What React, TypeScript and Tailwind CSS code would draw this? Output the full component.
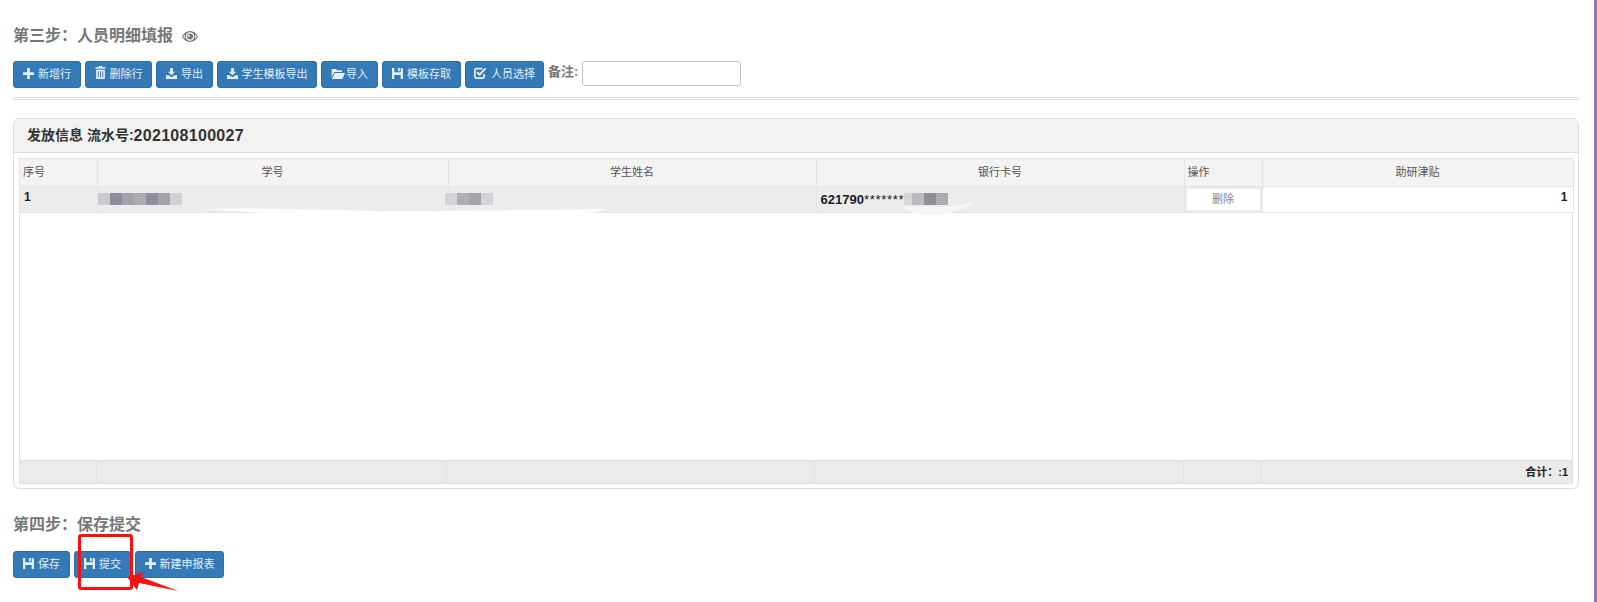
import React from "react";

const CJK = "font-['Liberation_Sans','Noto_Sans_CJK_SC',sans-serif]";

type IconProps = { className?: string };
const Plus = ({ className }: IconProps) => (
  <svg viewBox="0 0 12 12" className={className} fill="currentColor"><path d="M4.500 0h3v4.500H12v3H7.500V12h-3V7.500H0v-3h4.500z" /></svg>
);
const Trash = ({ className }: IconProps) => (
  <svg viewBox="0 0 12 14" className={className} fill="currentColor"><path d="M4 0h4v1.200h3.500v1.800H.5V1.200H4zM1.200 4h9.600v9a1 1 0 0 1-1 1H2.200a1 1 0 0 1-1-1zM3 5.500v7h1v-7zm2.500 0v7h1v-7zm2.500 0v7h1v-7z" fillRule="evenodd" /></svg>
);
const Download = ({ className }: IconProps) => (
  <svg viewBox="0 0 12 12" className={className} fill="currentColor"><path d="M4.500 0h3v4H10L6 8 2 4h2.500zM0 8h2.500L6 10l3.500-2H12v4H0z" /></svg>
);
const Folder = ({ className }: IconProps) => (
  <svg viewBox="0 0 14 12" className={className} fill="currentColor"><path d="M1 1h4l1 1.200h5V4H3.200L0.600 9.600V1.600zM3.800 5H14l-2.600 6H0.800z" /></svg>
);
const Floppy = ({ className }: IconProps) => (
  <svg viewBox="0 0 12 12" className={className} fill="currentColor"><path fillRule="evenodd" d="M0 0h2.500v4.500h7V0H11l1 1v11H0zM6.500 0h2v3.500h-2zM2.500 7.500v4.500h7V7.500z" /></svg>
);
const Check = ({ className }: IconProps) => (
  <svg viewBox="0 0 13 12" className={className} fill="none" stroke="currentColor"><path strokeWidth="1.700" d="M10.200 7v2.600a1.500 1.500 0 0 1-1.500 1.500H2.400A1.500 1.500 0 0 1 .9 9.600V3.200a1.500 1.500 0 0 1 1.500-1.500h6" /><path strokeWidth="2" d="M3.200 5.200 5.600 7.600 11.600 1.400" /></svg>
);
const Eye = ({ className }: IconProps) => (
  <svg viewBox="0 0 16 11" className={className} fill="currentColor"><path fillRule="evenodd" d="M8 0c3.600 0 6.400 2.400 8 5.500C14.400 8.600 11.600 11 8 11S1.600 8.600 0 5.500C1.600 2.400 4.400 0 8 0zM8 1.200a4.300 4.300 0 1 0 0 8.600 4.300 4.300 0 0 0 0-8.600zM2.900 3.300C2.100 3.900 1.600 4.700 1.200 5.500c.5.900 1.100 1.600 1.800 2.200a6 6 0 0 1-.1-4.400zM13.100 3.300a6 6 0 0 1 0 4.400c.7-.6 1.300-1.300 1.800-2.200-.5-.8-1-1.600-1.800-2.200z" /><path fillRule="evenodd" d="M8 2.500a3 3 0 1 1 0 6 3 3 0 0 1 0-6zM6.900 3.700a1 1 0 1 0 0 2 1 1 0 0 0 0-2z" /></svg>
);

const Btn = ({ icon, label, w, gap = "gap-[4px]" }: { icon: React.ReactNode; label: string; w: string; gap?: string }) => (
  <button className={`${w} ${gap} h-[27px] shrink-0 flex items-center justify-center rounded-[3px] border border-[#2e6da4] bg-[#337ab7] text-[#e8eef5] text-[11px] leading-none ${CJK}`}>
    {icon}
    <span>{label}</span>
  </button>
);

const Blocks = ({ colors }: { colors: string[] }) => (
  <span className="flex h-[12px] shrink-0">
    {colors.map((c, i) => (
      <span key={i} className="block h-[12px] w-[12px]" style={{ backgroundColor: c }} />
    ))}
  </span>
);

const ic = "h-[11px] w-[11px] -mt-[3px]";
const th = "h-[27px] border-r border-b border-[#e4e4e4] bg-[#f3f3f3] text-[11px] font-normal text-[#555] text-center p-0";
const td = "h-[26px] border-r border-b border-[#e4e4e4] bg-[#ececec] p-0 align-middle";
const ft = "border-r border-[#e2e2e2] h-full";

export default function App() {
  return (
    <div className={`relative h-[602px] w-full overflow-hidden bg-white pl-[13px] pr-[18px] pt-[26px] ${CJK}`}>
      <div className="absolute right-0 top-0 h-full w-[3px] bg-[#8b7bb0]" />

      <h2 className="flex h-[20px] items-center text-[16px] font-bold leading-[20px] text-[#777]">
        <span>第三步：人员明细填报</span>
        <Eye className="ml-[9px] h-[11px] w-[16px] text-[#777]" />
      </h2>

      <div className="mt-[15px] flex items-start gap-[4px]">
        <Btn w="w-[68px]" label="新增行" icon={<Plus className={ic} />} />
        <Btn w="w-[67px]" label="删除行" icon={<Trash className="h-[13px] w-[11px] -mt-[4px]" />} />
        <Btn w="w-[57px]" label="导出" icon={<Download className={ic} />} />
        <Btn w="w-[100px]" label="学生模板导出" icon={<Download className={ic} />} />
        <Btn w="w-[57px]" gap="gap-[1px]" label="导入" icon={<Folder className="h-[12px] w-[14px] -mt-[2px]" />} />
        <Btn w="w-[79px]" label="模板存取" icon={<Floppy className={ic} />} />
        <Btn w="w-[79px]" label="人员选择" icon={<Check className="h-[12px] w-[13px] -mt-[3px]" />} />
        <span className="mt-[2px] text-[13px] font-bold leading-[18px] text-[#777]">备注:</span>
        <input className="h-[25px] w-[159px] rounded-[3px] border border-[#c4c4c4] bg-white" />
      </div>

      <div className="mt-[9px] h-[3px] border-y border-[#dddddd]" />

      <section className="mt-[18px] flex h-[371px] flex-col rounded-[6px] border border-[#dddddd]">
        <div className="flex h-[34px] shrink-0 items-center rounded-t-[6px] border-b border-[#dddddd] bg-[#f2f2f2] pl-[13px] text-[14px] font-bold text-[#333]">
          发放信息 流水号:<span className="text-[16px] tracking-[0.3px]">202108100027</span>
        </div>

        <div className="relative mx-[5px] mb-[4px] mt-[5px] flex flex-1 flex-col border border-[#e2e2e2]">
          <table className="w-[1553px] table-fixed border-collapse">
            <colgroup>
              <col className="w-[77px]" />
              <col className="w-[351px]" />
              <col className="w-[368px]" />
              <col className="w-[368px]" />
              <col className="w-[78px]" />
              <col className="w-[311px]" />
            </colgroup>
            <thead>
              <tr>
                <th className={`${th} !text-left pl-[3px]`}>序号</th>
                <th className={th}>学号</th>
                <th className={th}>学生姓名</th>
                <th className={th}>银行卡号</th>
                <th className={`${th} !text-left pl-[3px]`}>操作</th>
                <th className={th}>助研津贴</th>
              </tr>
            </thead>
            <tbody>
              <tr>
                <td className={`${td} pl-[4px] pb-[4px] text-[12px] font-bold text-[#222]`}>1</td>
                <td className={td}><Blocks colors={["#c9c9cf", "#8f8e98", "#a3a3ab", "#ababb2", "#8f8f99", "#a3a3ab", "#d1d1d5"]} /></td>
                <td className={td}><span className="-ml-[4px] block"><Blocks colors={["#d4d4d8", "#adadb4", "#a3a3ab", "#d4d4d8"]} /></span></td>
                <td className={td}>
                  <span className="flex items-center pl-[4px] text-[13px] font-bold leading-none text-[#1a1a2a]">
                    621790<span className="font-normal tracking-[0.7px]">*******</span>
                    <span className="flex w-[44px] justify-end overflow-hidden">
                      <Blocks colors={["#d6d6da", "#bbbbc1", "#90909a", "#ababb2"]} />
                    </span>
                  </span>
                </td>
                <td className={`${td} px-[2px]`}>
                  <span className="block h-[21px] bg-white text-center text-[11px] leading-[21px] text-[#888]">删除</span>
                </td>
                <td className={`${td} !bg-white pr-[5px] pb-[4px] text-right text-[12px] font-bold text-[#222]`}>1</td>
              </tr>
            </tbody>
          </table>

          <svg className="absolute left-[185px] top-[45px] h-[16px] w-[400px]" viewBox="0 0 400 16" fill="#ffffff">
            <path d="M0 5C60 3 130 7 200 7c70 0 130-1 200-2-8 3-16 4-30 6-35 3-90 4-160 4C140 15 60 9 0 5z" />
          </svg>
          <svg className="absolute left-[880px] top-[42px] h-[16px] w-[80px]" viewBox="0 0 80 16" fill="#f6f6f6">
            <path d="M4 6c4 6 16 9 30 8 18-1 32-7 42-13-14 2-20 5-36 5C26 6 12 5 4 6z" />
          </svg>

          <div className="mt-auto flex h-[23px] border-t border-[#e2e2e2] bg-[#ebebeb] text-[11px] font-bold text-[#222]">
            <div className={`${ft} w-[77px]`} />
            <div className={`${ft} w-[351px]`} />
            <div className={`${ft} w-[369px]`} />
            <div className={`${ft} w-[369px]`} />
            <div className={`${ft} w-[78px]`} />
            <div className={`${ft} flex w-[311px] items-center justify-end pr-[3px] leading-none`}>合计：:1</div>
            <div className="flex-1" />
          </div>
        </div>
      </section>

      <h2 className="mt-[26px] h-[20px] text-[16px] font-bold leading-[20px] text-[#777]">第四步：保存提交</h2>

      <div className="mt-[16px] flex gap-[4px]">
        <Btn w="w-[57px]" label="保存" icon={<Floppy className={ic} />} />
        <Btn w="w-[57px]" label="提交" icon={<Floppy className={ic} />} />
        <Btn w="w-[89px]" label="新建申报表" icon={<Plus className={ic} />} />
      </div>

      <div className="absolute left-[78px] top-[534px] h-[56px] w-[55px] rounded-[3px] border-[3px] border-[#fb0f0f]" />
      <svg className="absolute left-[124px] top-[570px] h-[24px] w-[56px]" viewBox="0 0 56 24" fill="#fb0f0f">
        <path d="M3 7 20 2 17 7 54 21 15 13 13 20z" />
      </svg>
    </div>
  );
}
